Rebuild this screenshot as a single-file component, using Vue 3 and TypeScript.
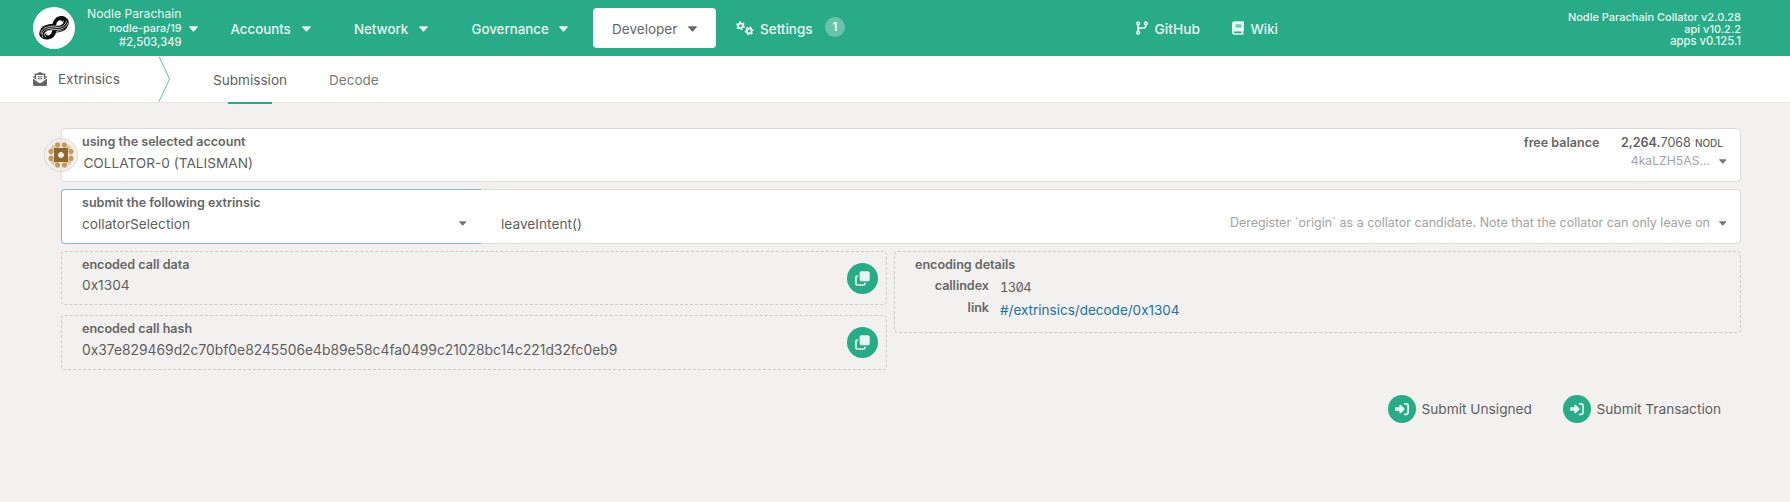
<script setup lang="ts">
interface NavItem { label: string; cls: string; active?: boolean }
interface Encoded { label: string; value: string; cls: string }

const nav: NavItem[] = [
  { label: 'Accounts', cls: 'accounts' },
  { label: 'Network', cls: 'network' },
  { label: 'Governance', cls: 'governance' },
  { label: 'Developer', cls: 'developer', active: true },
]
const encoded: Encoded[] = [
  { label: 'encoded call data', value: '0x1304', cls: 'data' },
  { label: 'encoded call hash', value: '0x37e829469d2c70bf0e8245506e4b89e58c4fa0499c21028bc14c221d32fc0eb9', cls: 'hash' },
]
const actions: string[] = ['Submit Unsigned', 'Submit Transaction']

// outer dots of the account identicon, as [x, y] offsets from its centre
const dots: [number, number][] = [
  [-3.4, -10], [3.4, -10], [-3.4, 10], [3.4, 10],
  [-10, -3.4], [-10, 3.4], [10, -3.4], [10, 3.4],
]
</script>

<template>
  <div class="app">
    <header class="topbar">
      <svg class="logo" viewBox="0 0 42 42">
        <circle cx="21" cy="21" r="21" fill="#fff" />
        <g fill="none" stroke="#0b0b0b">
          <path stroke-width="5.6" d="M15.5 29.6C10.5 30.6 8 27.5 9.6 24.6C11.5 21.2 17 20.6 21 21C26 21.3 31.5 20.6 32.8 16.8C33.8 13 30 11.3 26.8 12C22.5 13 22.3 17.5 21.3 21C20.2 25.5 19.8 28.7 15.5 29.6Z" />
          <path stroke-width="1.1" d="M12 31C13 26.5 17 25.200 21 25.200C27 25.200 31.500 24 34 20M8 22C10.500 18.500 14 17.500 20 17.300" />
          <path stroke="#fff" stroke-width=".7" d="M10 30.5C7.5 26 11 22 17.500 21.200L26 20.400C30 20 32.500 17.500 33.600 14M13 30C9.500 27 13 23.300 18 22.900L27 22.200C31 21.500 33.500 19 34.800 16M8 27C7.500 23 12 20 17.500 19.500L25 18.700C28 18.300 30 16.500 30.500 13.500" />
          <path stroke="none" fill="#fff" d="M26.300 13.200C23.600 14.300 23.600 16.500 23.100 18.400C26.500 18.400 29 17.200 29.300 15.200C29.400 13.600 28 12.900 26.300 13.200ZM15.900 28.400C18.600 27.300 18.800 25 19.300 23.300C16 23.400 13.300 24.400 13 26.500C12.900 28 14.300 28.800 15.900 28.400Z" />
        </g>
      </svg>
      <div class="chain">
        <div class="name">Nodle Parachain</div>
        <div class="spec">nodle-para/19</div>
        <div class="block">#2,503,349</div>
      </div>
      <svg class="caret chain-caret" viewBox="0 0 9 6"><path d="M.6.3h7.8q.7.2.2.9L5.2 5.2q-.7.7-1.4 0L.4 1.2Q-.1.5.6.3z" /></svg>
      <nav>
        <a v-for="n in nav" :key="n.label" :class="['item', n.cls, { active: n.active }]">
          <span>{{ n.label }}</span>
          <svg class="caret" viewBox="0 0 9 6"><path d="M.6.3h7.8q.7.2.2.9L5.2 5.2q-.7.7-1.4 0L.4 1.2Q-.1.5.6.3z" /></svg>
        </a>
        <a class="item settings">
          <svg class="cogs" viewBox="0 0 18 15">
            <g fill="none" stroke="currentColor">
              <circle cx="4.5" cy="4.7" r="2.4" stroke-width="1.8" />
              <circle cx="4.5" cy="4.7" r="3.7" stroke-width="1.4" stroke-dasharray="2 1.875" />
              <circle cx="13.2" cy="9.9" r="2.4" stroke-width="1.8" />
              <circle cx="13.2" cy="9.9" r="3.7" stroke-width="1.4" stroke-dasharray="2 1.875" stroke-dashoffset="2" />
            </g>
          </svg>
          <span>Settings</span>
          <b class="badge">1</b>
        </a>
        <a class="item github">
          <svg class="branch" viewBox="0 0 448 512"><path d="M80 104a24 24 0 1 0 0-48 24 24 0 1 0 0 48zm80-24c0 32.8-19.7 61-48 73.3v87.8c18.8-10.9 40.7-17.1 64-17.1h96c35.3 0 64-28.7 64-64v-6.7C307.7 141 288 112.8 288 80c0-44.2 35.8-80 80-80s80 35.8 80 80c0 32.8-19.7 61-48 73.3V160c0 70.7-57.3 128-128 128H176c-35.3 0-64 28.7-64 64v6.7c28.3 12.3 48 40.5 48 73.3c0 44.2-35.8 80-80 80s-80-35.8-80-80c0-32.8 19.7-61 48-73.3V352 153.3C19.7 141 0 112.8 0 80C0 35.8 35.8 0 80 0s80 35.8 80 80zm232 0a24 24 0 1 0 -48 0 24 24 0 1 0 48 0zM80 456a24 24 0 1 0 0-48 24 24 0 1 0 0 48z" /></svg>
          <span>GitHub</span>
        </a>
        <a class="item wiki">
          <svg class="book" viewBox="0 0 448 512"><path d="M96 0C43 0 0 43 0 96V416c0 53 43 96 96 96H384h32c17.7 0 32-14.3 32-32s-14.3-32-32-32V384c17.7 0 32-14.3 32-32V32c0-17.7-14.3-32-32-32H384 96zm0 384H352v64H96c-17.7 0-32-14.3-32-32s14.3-32 32-32zm32-240c0-8.8 7.2-16 16-16H336c8.8 0 16 7.2 16 16s-7.2 16-16 16H144c-8.8 0-16-7.2-16-16zm16 48H336c8.8 0 16 7.2 16 16s-7.2 16-16 16H144c-8.8 0-16-7.2-16-16s7.2-16 16-16z" /></svg>
          <span>Wiki</span>
        </a>
      </nav>
      <div class="versions">
        <div>Nodle Parachain Collator v2.0.28</div>
        <div>api v10.2.2</div>
        <div class="apps">apps v0.125.1</div>
      </div>
    </header>

    <div class="tabs">
      <svg class="envelope" viewBox="0 0 14 14">
        <path d="M2.400 7V2.200h9.200V7M4.500 1.800L7 .7l2.500 1.100" fill="none" stroke="currentColor" stroke-width="1.400" />
        <path d="M1.600 3.600v3L0 5.500q0-.7.600-1.100zM12.400 3.600v3L14 5.500q0-.7-.6-1.100z" />
        <path d="M0 6.600l5 3.700q2 1.300 4 0l5-3.700v5.900q0 1.500-1.500 1.500h-11Q0 14 0 12.500zM4.500 4.200h5v1h-5zM4.500 6.300h5v1h-5z" />
      </svg>
      <span class="section">Extrinsics</span>
      <svg class="chevron" viewBox="0 0 13 46"><path d="M1 .5L11.5 23 1 45.5" fill="none" stroke="#63c2aa" /></svg>
      <a class="tab submission">Submission</a>
      <a class="tab decode">Decode</a>
    </div>

    <main>
      <section class="card account">
        <svg class="identicon" viewBox="-17 -17 34 34">
          <circle r="16.5" fill="#f2f1ef" stroke="#d9d9d9" />
          <path d="M0-17v34" stroke="#dddddd" />
          <path d="M-9-9l4 4M9-9L5-5M-9 9l4-4M9 9L5 5" stroke="#e0c8a4" stroke-width="4" />
          <ellipse v-for="(d, i) in dots" :key="i" :cx="d[0]" :cy="d[1]" :rx="i < 4 ? 2.6 : 2.5" :ry="2.8" fill="#c69a5c" />
          <rect x="-7" y="-7" width="14" height="14" fill="#8f6830" />
          <path d="M-1.5-3h3v1.5H3v3H1.5V3h-3V1.5H-3v-3h1.5z" fill="#f5efe8" />
        </svg>
        <div class="left">
          <label>using the selected account</label>
          <div class="value account-name">COLLATOR-0 (TALISMAN)</div>
        </div>
        <div class="right">
          <div class="balance">
            <label>free balance</label>
            <span class="amount"><b>2,264.</b><span class="frac">7068</span><span class="unit">NODL</span></span>
          </div>
          <div class="hint">
            <span class="address">4kaLZH5AS...</span>
            <svg class="caret small" viewBox="0 0 9 6"><path d="M.6.3h7.8q.7.2.2.9L5.2 5.2q-.7.7-1.4 0L.4 1.2Q-.1.5.6.3z" /></svg>
          </div>
        </div>
      </section>

      <section class="extrinsic">
        <div class="pallet">
          <label>submit the following extrinsic</label>
          <div class="value pallet-row">
            <span>collatorSelection</span>
            <svg class="caret small" viewBox="0 0 9 6"><path d="M.6.3h7.8q.7.2.2.9L5.2 5.2q-.7.7-1.4 0L.4 1.2Q-.1.5.6.3z" /></svg>
          </div>
        </div>
        <div class="method">
          <span class="value call">leaveIntent()</span>
          <div class="hint">
            <span>Deregister `origin` as a collator candidate. Note that the collator can only leave on</span>
            <svg class="caret small" viewBox="0 0 9 6"><path d="M.6.3h7.8q.7.2.2.9L5.2 5.2q-.7.7-1.4 0L.4 1.2Q-.1.5.6.3z" /></svg>
          </div>
        </div>
      </section>

      <div class="details">
        <div class="encoded">
          <section v-for="e in encoded" :key="e.cls" :class="['dashed', e.cls]">
            <div>
              <label>{{ e.label }}</label>
              <div class="value">{{ e.value }}</div>
            </div>
            <button class="round copy">
              <svg viewBox="0 0 15 15">
                <path d="M3.2 5H2.2Q1 5 1 6.2v6.6Q1 14 2.2 14h6.6q1.2 0 1.2-1.2v-1" fill="none" stroke="currentColor" stroke-width="1.7" />
                <rect x="4.7" y=".2" width="10" height="10" rx="1.6" fill="currentColor" />
              </svg>
            </button>
          </section>
        </div>
        <section class="dashed encoding">
          <label>encoding details</label>
          <div class="pair first">
            <label>callindex</label><span class="mono">1304</span>
          </div>
          <div class="pair second">
            <label>link</label><a>#/extrinsics/decode/0x1304</a>
          </div>
        </section>
      </div>

      <div class="actions">
        <div v-for="a in actions" :key="a" class="action">
          <button class="round">
            <svg viewBox="0 0 512 512"><path d="M217.9 105.9L340.7 228.7c7.2 7.2 11.3 17.1 11.3 27.3s-4.1 20.1-11.3 27.3L217.9 406.1c-6.4 6.4-15 9.9-24 9.9c-18.7 0-33.9-15.2-33.9-33.9l0-62.1L32 320c-17.7 0-32-14.3-32-32l0-64c0-17.7 14.3-32 32-32l128 0 0-62.1c0-18.7 15.2-33.9 33.9-33.9c9 0 17.6 3.6 24 9.9zM352 416l64 0c17.7 0 32-14.3 32-32l0-256c0-17.7-14.3-32-32-32l-64 0c-17.7 0-32-14.3-32-32s14.3-32 32-32l64 0c53 0 96 43 96 96l0 256c0 53-43 96-96 96l-64 0c-17.7 0-32-14.3-32-32s14.3-32 32-32z" /></svg>
          </button>
          <span>{{ a }}</span>
        </div>
      </div>
    </main>
  </div>
</template>

<style>
body { background: #f2f1ef; }
</style>

<style scoped>
.app { box-sizing: border-box; height: 502px; overflow: hidden; background: #f2f1ef; color: #5f5f5f; font: 13.6px/20px Inter, "Open Sans", sans-serif; }
.app * { box-sizing: border-box; }
svg { display: block; flex: none; fill: currentColor; }
.topbar { display: flex; align-items: flex-start; height: 56px; padding: 0 49px 0 33px; background: #29ab88; color: #e7f6f1; white-space: nowrap; }
.logo { width: 42px; height: 42px; margin-top: 7px; }
.chain { width: 106.5px; padding-top: 6px; text-align: right; font-weight: 500; }
.name { font-size: 12.17px; line-height: 15px; font-weight: 400; }
.spec { margin-top: 1px; font-size: 10.8px; line-height: 14px; }
.block { font-size: 11.15px; line-height: 12px; }
.caret { width: 9px; height: 6px; }
.chain-caret { margin: 26px 0 0 7.5px; }
nav { display: flex; align-items: center; height: 56px; }
.item { display: flex; align-items: center; font-weight: 500; font-size: 13.3px; }
.item > span { padding-top: 1px; }
.item .caret { margin-left: auto; margin-top: 2px; }
.accounts { width: 80.5px; margin-left: 32.5px; }
.network { width: 74px; margin-left: 43px; font-size: 13.3px; }
.governance { width: 96.5px; margin-left: 43.5px; }
.developer { width: 123px; height: 40px; margin-left: 25px; padding: 0 19px; border-radius: 4px; background: #fff; color: #666; font-size: 13.55px; font-weight: 400; }
.settings { width: 109px; margin-left: 20px; font-size: 13.5px; }
.cogs { width: 18px; height: 15px; margin-right: 6px; }
.badge { width: 20px; height: 20px; margin: -2px 0 0 auto; border-radius: 50%; background: #69c4ad; color: #eefaf6; text-align: center; font-size: 11.5px; font-weight: 600; }
.github { width: 65px; margin-left: 291px; font-size: 13.77px; }
.branch { width: 12px; height: 14px; margin-right: 6.5px; }
.wiki { width: 47px; margin-left: 31px; }
.book { width: 12px; height: 14px; margin-right: 6.5px; }
.versions { margin-left: auto; padding-top: 11px; text-align: right; font-size: 11px; line-height: 12px; font-weight: 500; }
.apps { font-size: 11.3px; }

.tabs { display: flex; align-items: flex-start; height: 47px; padding-left: 33px; border-bottom: 1px solid #e6e5e4; background: #fff; }
.envelope { width: 14px; height: 14px; margin-top: 16px; color: #666; }
.section { width: 62px; margin: 13px 0 0 11px; font-size: 13.5px; }
.chevron { width: 13px; height: 46px; margin-left: 38px; }
.tab { height: 48px; padding-top: 14px; font-size: 13.6px; }
.submission { display: flex; flex-direction: column; align-items: center; width: 74px; margin-left: 42px; }
.submission::after { content: ""; flex: none; width: 44px; height: 2px; margin-top: 12px; background: #29ab88; }
.decode { margin-left: 42px; color: #7a7a7a; font-size: 13.55px; }

main { padding: 25px 49px 0 61px; }
label { display: block; font-size: 12.55px; line-height: 16px; font-weight: 600; color: #666; }
.value { font-size: 13.69px; line-height: 20px; }
.card, .pallet, .method { border: 1px solid #dddddd; border-radius: 4px; background: #fff; }
.account { position: relative; display: flex; justify-content: space-between; height: 54px; padding: 4.5px 14px 0 20px; }
.identicon { position: absolute; left: -18px; top: 9px; width: 34px; height: 34px; }
.account-name { margin: 3.5px 0 0 1.4px; font-size: 13.65px; }
.right { padding-top: 1px; }
.balance { display: flex; justify-content: flex-end; gap: 21.5px; padding-right: 3px; }
.amount { display: flex; align-items: baseline; font-size: 12.55px; line-height: 16px; }
.amount b { font-weight: 600; }
.unit { margin-left: 4px; font-size: 10px; font-weight: 500; }
.hint { display: flex; align-items: center; justify-content: flex-end; gap: 8.5px; color: #a2a2a2; font-size: 12.47px; line-height: 16px; }
.address { font-size: 12.2px; }
.right .hint { margin-top: 2px; }
.caret.small { width: 7.5px; height: 5px; margin-top: 2px; color: #777; }

.extrinsic { display: flex; height: 55px; margin-top: 7px; }
.pallet { width: 420px; padding: 4.5px 14px 0 20px; border-color: #85b9d2; border-right: 0; border-radius: 4px 0 0 4px; }
.pallet-row { display: flex; align-items: center; justify-content: space-between; margin-top: 3.5px; }
.pallet-row .caret.small { margin: -2px .5px 0 0; }
.method { display: flex; flex: 1; justify-content: space-between; padding: 24px 14px 0 20px; border-left: 0; border-radius: 0 4px 4px 0; }
.method .hint { align-self: flex-start; padding-top: 1px; }
.method .caret.small { margin-top: 0; }

.details { display: flex; align-items: flex-start; gap: 7px; margin-top: 7px; }
.encoded { width: 826px; }
.dashed { border: 1px dashed #cecdcb; border-radius: 4px; padding: 4.5px 8px 0 20px; }
.data, .hash { display: flex; justify-content: space-between; }
.data { height: 54px; }
.data .value { margin-top: 2.5px; }
.hash { height: 55px; margin-top: 10px; }
.hash .value { margin-top: 3.5px; font-size: 13.83px; }
.round { display: flex; align-items: center; justify-content: center; width: 28px; height: 28px; padding: 0; border: 0; border-radius: 50%; background: #29ab88; color: #e5f5f0; }
.round svg { width: 14px; height: 14px; }
.copy { width: 31px; height: 31px; margin-top: 6.5px; }
.copy svg { width: 15px; height: 15px; }
.encoding { flex: 1; height: 82px; }
.pair { display: flex; }
.pair label { width: 74px; margin-right: 11px; text-align: right; }
.first { height: 18px; margin-top: 5px; }
.second { margin-top: 4px; }
.second a { padding-top: .5px; color: #1f6f9f; font-size: 13.5px; }
.mono { font-size: 13px; line-height: 18px; letter-spacing: -.65px; font-feature-settings: "zero", "tnum"; }

.actions { display: flex; justify-content: flex-end; gap: 31px; margin-top: 25px; padding-right: 20px; }
.action { display: flex; align-items: center; gap: 5.5px; font-size: 13.68px; }
</style>
